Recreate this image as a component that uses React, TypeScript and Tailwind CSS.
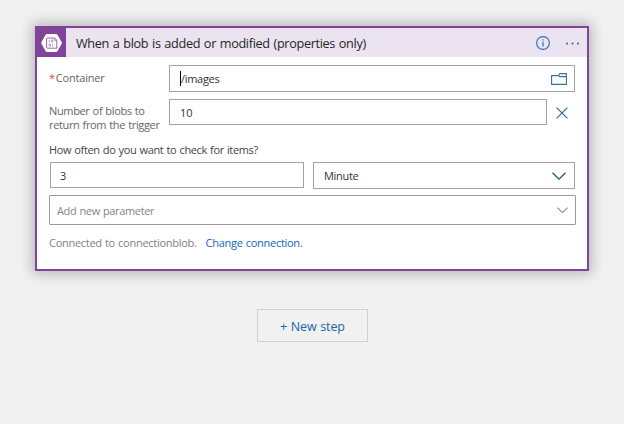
import React from "react";

function BlobIcon() {
  return (
    <svg width="22" height="20" viewBox="0 0 22 20" fill="none">
      <path d="M5.8 1h9.4q.8 0 1.2.7l4.2 7.4q.5.9 0 1.8l-4.2 7.3q-.4.8-1.2.8H5.8q-.8 0-1.2-.8L.5 10.9Q0 10 .5 9.1l4.1-7.4Q5 1 5.8 1Z" fill="#fff" />
      <path d="M6.5 5h7l2.3 2.2v8H6.5q-.9 0-.9-.9V5.9q0-.9.9-.9Z" stroke="#9564a8" strokeWidth="1" />
      <path d="M13.4 5v2.4h2.4" stroke="#9564a8" strokeWidth=".7" />
      <path d="M8.3 6.7v2.6M10.3 6.9h1.5v2.2h-1.5zM8 11h1.5v2.2H8zM11.6 10.7v2.8" stroke="#a67bb5" strokeWidth=".7" />
    </svg>
  );
}

function Chevron({ className, width }: { className: string; width: number }) {
  return (
    <svg width={width} height={width / 2 + 1} viewBox="0 0 14 8" fill="none" className={className}>
      <path d="m.5.8 6.5 6.3L13.5.8" stroke="currentColor" strokeWidth="1.3" />
    </svg>
  );
}

const field = "flex items-center border border-[#a3a3a3] bg-white text-[11px] text-[#333]";

export default function App() {
  return (
    <main className="flex h-[424px] w-[624px] flex-col items-start bg-[#f1f1f1] pl-[35px] pt-[26px] font-['Open_Sans','Noto_Sans',sans-serif]">
      <section className="h-[245px] w-[554px] border-2 border-[#80449a] bg-white shadow-[0_0_12px_3px_rgba(0,0,0,0.24)]">
        <header className="flex h-[29px] items-center bg-[#ebe3f0]">
          <div className="flex h-full w-[29px] items-center justify-center bg-[#80449a]">
            <BlobIcon />
          </div>
          <h1 className="ml-[10px] mt-px whitespace-nowrap text-[12.7px] leading-[18px] tracking-[-0.34px] text-[#252525] [word-spacing:0.8px]">
            When a blob is added or modified (properties only)
          </h1>
          <svg width="14" height="14" viewBox="0 0 14 14" fill="none" className="ml-auto">
            <circle cx="7" cy="7" r="6.4" stroke="#2b6fb8" strokeWidth="1.1" />
            <path d="M7 5.8v4.7M7 3.2v1.4" stroke="#2b6fb8" strokeWidth="1.2" />
          </svg>
          <svg width="15" height="3" viewBox="0 0 15 3" className="ml-[15px] mr-[7px] mt-px" fill="#2b6fb8">
            <circle cx="2" cy="1.5" r="1.1" />
            <circle cx="7.5" cy="1.5" r="1.1" />
            <circle cx="13" cy="1.5" r="1.1" />
          </svg>
        </header>

        <div className="pl-3 pt-2 tracking-[-0.35px] [word-spacing:0.6px]">
          <div className="flex">
            <label className="w-[120px] whitespace-nowrap pt-[5px] text-[11px] leading-[15px] tracking-[-0.2px] text-[#666]">
              <span className="mr-px text-[#e44]">*</span>Container
            </label>
            <div className={`${field} h-[27px] w-[406px] pl-[10px] pr-[7px]`}>
              <span className="h-[15px] w-px bg-black" />
              <span className="pt-0.5 tracking-[-0.3px]">/images</span>
              <svg width="16" height="12" viewBox="0 0 16 12" fill="none" className="ml-auto">
                <path d="M.6 2.6h7.2l1-2h6.6v10.8H.6ZM7.8 2.6l.8 1h6.8" stroke="#39728f" strokeWidth="1.1" />
              </svg>
            </div>
          </div>

          <div className="mt-[7px] flex">
            <label className="w-[120px] whitespace-nowrap pt-[5px] text-[11px] leading-[14px] text-[#666]">
              <span className="tracking-[-0.35px]">Number of blobs to</span><br />return from the trigger
            </label>
            <div className={`${field} h-[26px] w-[378px] pl-[10px] pt-[3px] tracking-normal`}>10</div>
            <svg width="12" height="12" viewBox="0 0 12 12" fill="none" className="ml-[9px] mt-2">
              <path d="m.6.6 10.8 10.8m0-10.8L.6 11.4" stroke="#286794" strokeWidth="1.1" />
            </svg>
          </div>

          <p className="mt-[10px] whitespace-nowrap text-[11px] leading-[16px] text-[#444]">
            How often do you want to check for items?
          </p>
          <div className="ml-px mt-1 flex items-start gap-[9px]">
            <div className={`${field} h-[26px] w-[254px] pl-[9px] pt-[3px]`}>3</div>
            <div className={`${field} h-[27px] w-[262px] pl-[10px] pr-2 pt-px`}>
              <span className="tracking-[-0.3px]">Minute</span>
              <Chevron width={14} className="ml-auto text-[#165885]" />
            </div>
          </div>
          <div className="mt-[6px] flex h-[30px] w-[527px] items-center rounded-[1px] border border-[#9b9b9b] pl-[7px] pr-[7px] pt-px text-[11px] text-[#858585]">
            <span className="pt-px">Add new parameter</span>
            <Chevron width={11} className="mb-px ml-auto text-[#888]" />
          </div>
          <div className="mt-[10px] flex gap-[9px] whitespace-nowrap text-[11px] leading-[16px] text-[#808080]">
            <span className="tracking-[-0.28px]">Connected to connectionblob.</span>
            <a className="tracking-[-0.28px] text-[#0c67bd]">Change connection.</a>
          </div>
        </div>
      </section>

      <button className="ml-[222px] mt-[38px] h-[33px] w-[111px] whitespace-nowrap border border-[#d0d0d0] pt-[3px] text-[12.5px] tracking-[-0.1px] text-[#1b65a8] [word-spacing:0.5px]">
        + New step
      </button>
    </main>
  );
}
